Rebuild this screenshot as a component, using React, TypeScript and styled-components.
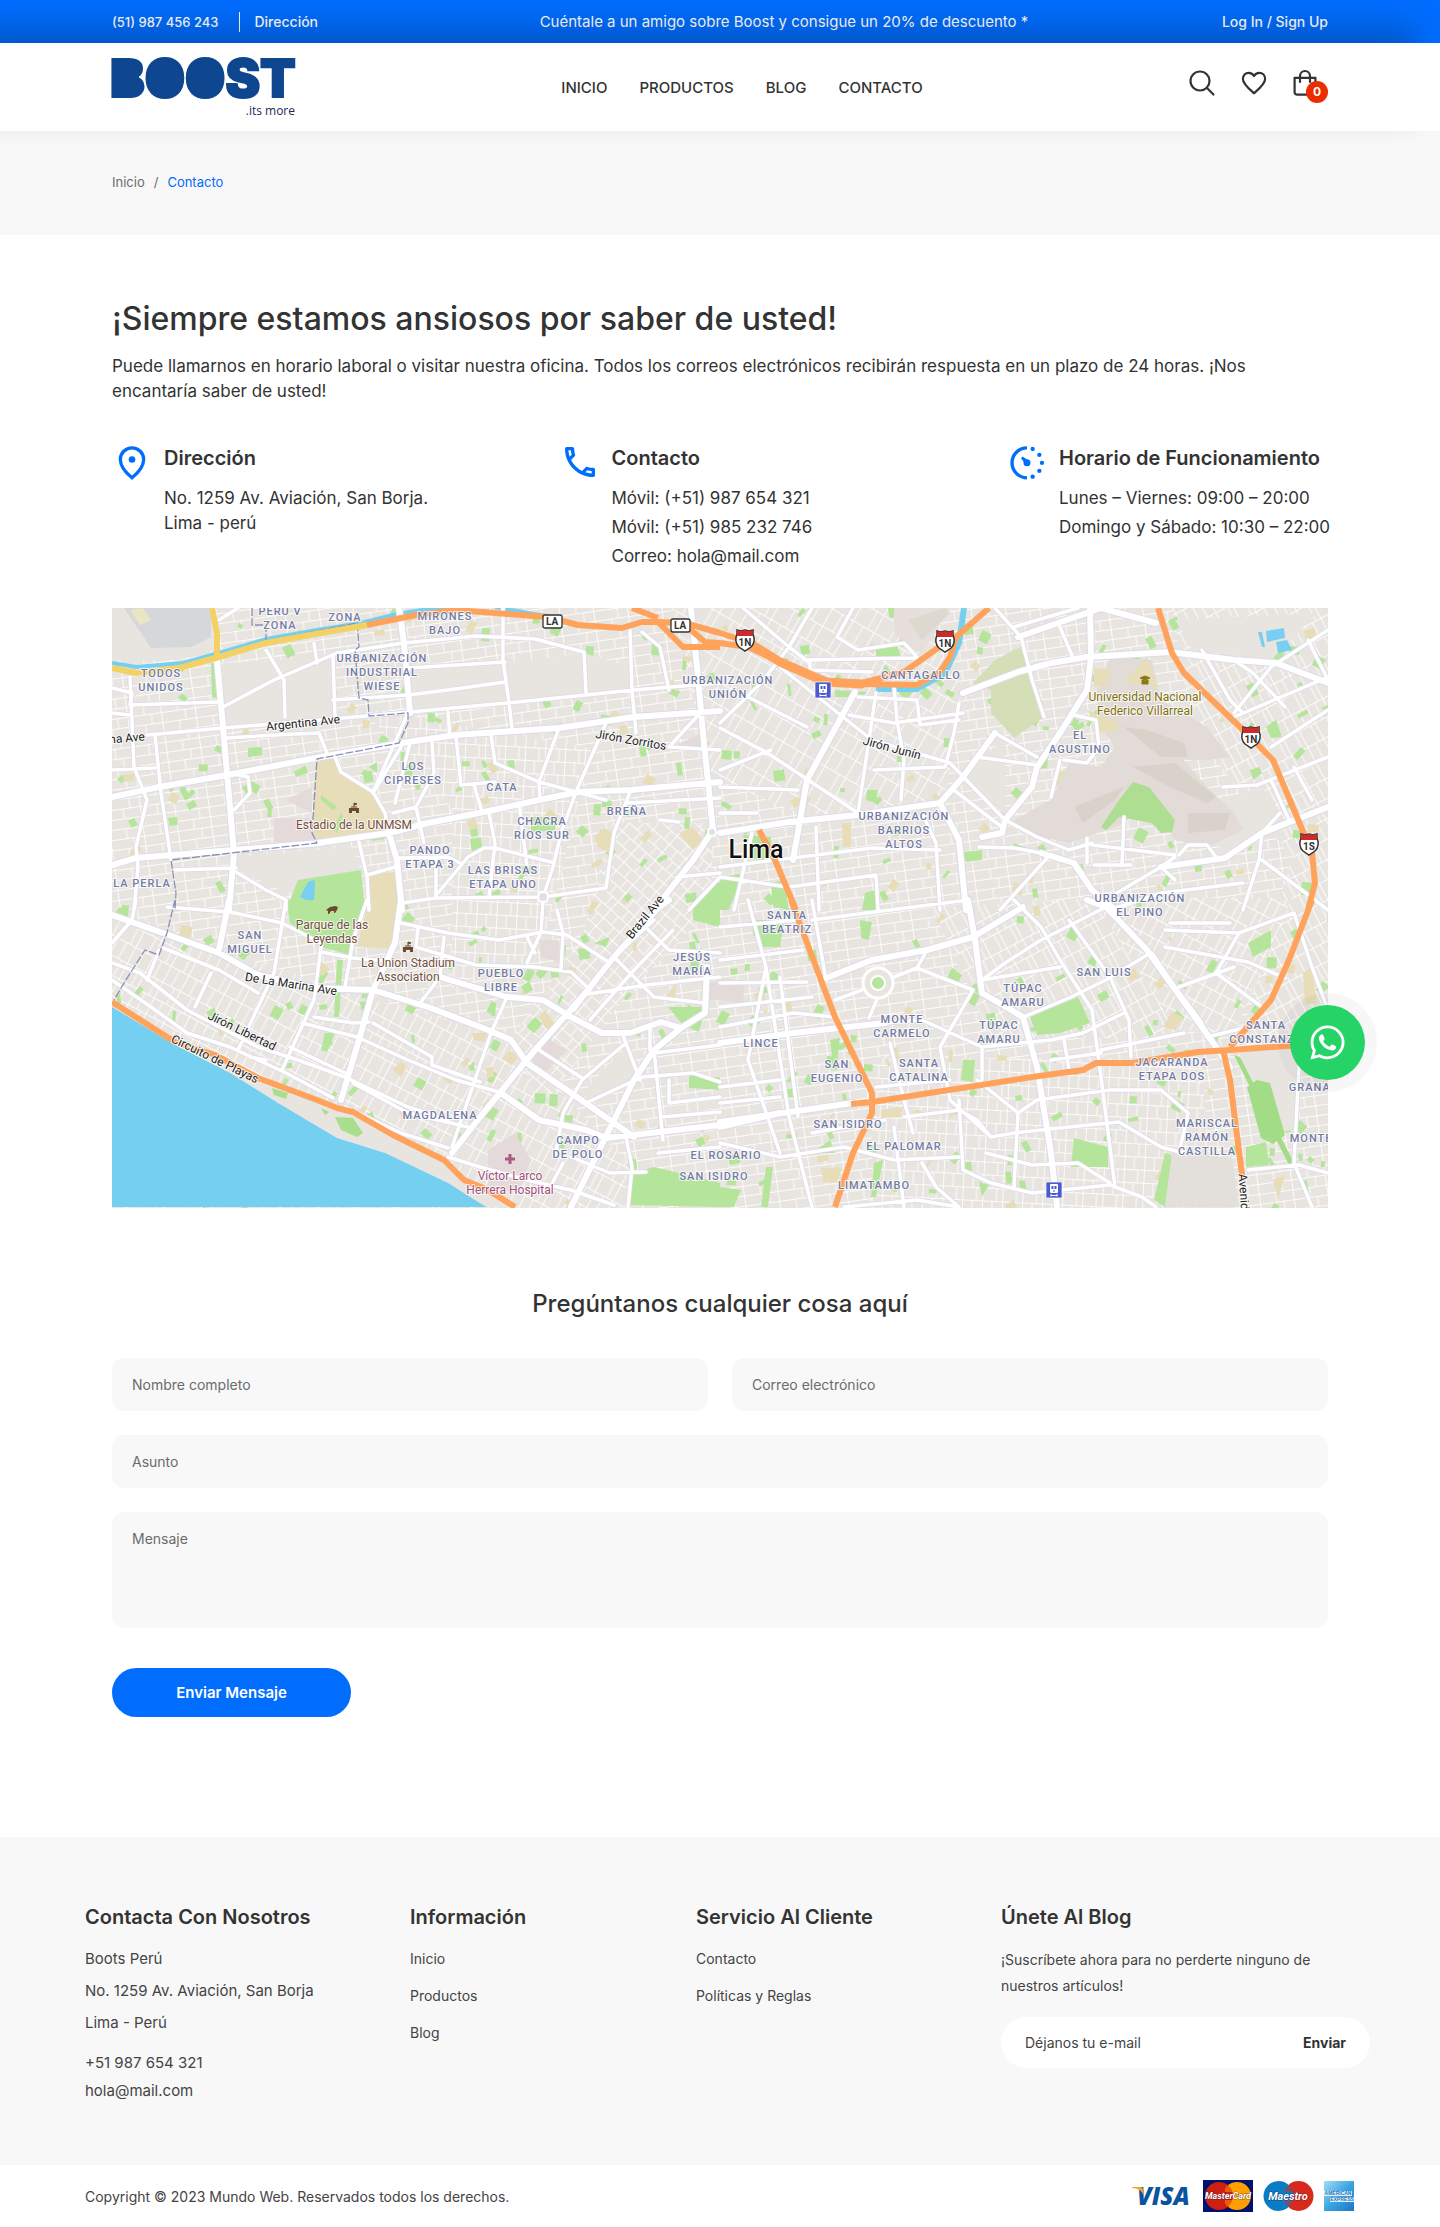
import React from "react";
import styled, { createGlobalStyle } from "styled-components";
import { MdOutlineCall } from "react-icons/md";
import { FaWhatsapp } from "react-icons/fa";

const color = {
  blue: "#006dff",
  ink: "#333333",
  text: "#444444",
  muted: "#6b6b6b",
  panel: "#f8f8f8",
};

const GlobalStyle = createGlobalStyle`
  *, *::before, *::after { box-sizing: border-box; }
  body {
    margin: 0;
    background: #fff;
    color: ${color.ink};
    font-family: Inter, "Liberation Sans", sans-serif;
    font-size: 17px;
  }
  h1, h2, h3, p, ul { margin: 0; padding: 0; }
  ul { list-style: none; }
  a { color: inherit; text-decoration: none; }
  button, input, textarea { font-family: inherit; border: 0; }
  button { cursor: pointer; }
`;

/* ---------- Header ---------- */

const TopBar = styled.div`
  display: flex;
  align-items: center;
  justify-content: space-between;
  height: 43px;
  padding: 0 112px;
  background: ${color.blue};
  color: #fff;
  font-size: 14px;
  font-weight: 500;
`;

const TopLinks = styled.div`
  display: flex;
  align-items: center;
  padding-right: 28px;
`;

const TopPhone = styled.a`
  font-size: 13px;
`;

const TopDivider = styled.span`
  width: 1px;
  height: 20px;
  margin: 0 14px 0 21px;
  background: #fff;
`;

const Promo = styled.p`
  font-size: 15px;
  font-weight: 400;
`;

const Header = styled.header`
  position: relative;
  z-index: 1;
  display: flex;
  align-items: center;
  justify-content: space-between;
  height: 88px;
  padding: 0 112px;
  background: #fff;
  box-shadow: -24px -16px 32px rgba(0, 0, 0, 0.22);
`;

const Nav = styled.nav`
  display: flex;
  gap: 32px;
  font-size: 15px;
  font-weight: 500;
`;

const Actions = styled.div`
  display: flex;
  gap: 24px;
  padding-bottom: 8px;
`;

const IconButton = styled.button`
  position: relative;
  display: block;
  width: 28px;
  height: 28px;
  padding: 0;
  background: none;
  color: ${color.ink};
`;

const BagButton = styled(IconButton)`
  width: 36px;
  text-align: left;
`;

const Badge = styled.span`
  position: absolute;
  right: 0;
  bottom: -6px;
  width: 22px;
  height: 22px;
  border-radius: 50%;
  background: #eb2d00;
  color: #fff;
  font-size: 12px;
  font-weight: 700;
  line-height: 22px;
  text-align: center;
`;

const Crumbs = styled.nav`
  display: flex;
  gap: 9px;
  padding: 41px 112px 42px;
  background: ${color.panel};
  color: ${color.muted};
  font-size: 13px;
  line-height: 21px;
`;

const CurrentCrumb = styled.a`
  color: ${color.blue};
`;

/* ---------- Contact details ---------- */

const Main = styled.main`
  padding: 64px 112px 120px;
`;

const Title = styled.h1`
  font-size: 32px;
  font-weight: 500;
  line-height: 40px;
`;

const Lead = styled.p`
  margin-top: 15px;
  line-height: 25px;
`;

const Details = styled.div`
  display: grid;
  grid-template-columns: repeat(3, 321px);
  justify-content: space-between;
  margin: 38px 0 39px;
`;

const Detail = styled.section`
  display: flex;
  gap: 12px;
`;

const DetailIcon = styled.span`
  flex: none;
  width: 40px;
  height: 40px;
  color: ${color.blue};
`;

const DetailBody = styled.div<{ $gap: number }>`
  display: flex;
  flex-direction: column;
  gap: ${(p) => p.$gap}px;
  padding-top: 4px;
  line-height: 25px;
  white-space: nowrap;
`;

const DetailTitle = styled.h3<{ $after: number }>`
  margin-bottom: ${(p) => p.$after}px;
  font-size: 20px;
  font-weight: 600;
  line-height: 24px;
`;

const MapFrame = styled.div`
  height: 600px;
  overflow: hidden;

  svg {
    display: block;
    width: 100%;
    height: 100%;
  }
`;

const ChatButton = styled.a`
  position: absolute;
  top: 1005px;
  right: 75px;
  display: flex;
  align-items: center;
  justify-content: center;
  width: 75px;
  height: 75px;
  border-radius: 50%;
  background: #25d366;
  box-shadow: 0 0 0 12px rgba(0, 0, 0, 0.03);
  color: #fff;
  font-size: 39px;
`;

/* ---------- Contact form ---------- */

const Form = styled.form`
  display: grid;
  grid-template-columns: 1fr 1fr;
  gap: 24px;
  margin-top: 80px;
`;

const FormTitle = styled.h2`
  grid-column: 1 / -1;
  margin-bottom: 14px;
  font-size: 24px;
  font-weight: 500;
  line-height: 32px;
  text-align: center;
`;

const Field = styled.input<{ $wide?: boolean }>`
  grid-column: ${(p) => (p.$wide ? "1 / -1" : "auto")};
  width: 100%;
  height: 53px;
  padding: 0 20px;
  border-radius: 12px;
  background: ${color.panel};
  font-size: 14px;

  &::placeholder { color: ${color.muted}; opacity: 1; }
`;

const MessageField = styled.textarea`
  grid-column: 1 / -1;
  display: block;
  width: 100%;
  height: 116px;
  padding: 16px 20px;
  border-radius: 12px;
  background: ${color.panel};
  font-size: 14px;
  line-height: 22px;
  resize: none;

  &::placeholder { color: ${color.muted}; opacity: 1; }
`;

const Submit = styled.button`
  justify-self: start;
  width: 239px;
  height: 49px;
  margin-top: 16px;
  border-radius: 25px;
  background: ${color.blue};
  color: #fff;
  font-size: 15px;
  font-weight: 600;
`;

/* ---------- Footer ---------- */

const FooterTop = styled.footer`
  display: grid;
  grid-template-columns: 325fr 286fr 305fr 369fr;
  padding: 68px 70px 62px 85px;
  background: ${color.panel};
  color: ${color.text};
  font-size: 14px;
  line-height: 24px;
`;

const FooterTitle = styled.h3`
  margin-bottom: 18px;
  color: ${color.ink};
  font-size: 20px;
  font-weight: 600;
  line-height: 24px;
`;

const AddressList = styled.ul<{ $gap: number }>`
  display: flex;
  flex-direction: column;
  gap: ${(p) => p.$gap}px;
  font-size: 15px;

  & + & { margin-top: 16px; }
`;

const LinkList = styled.ul`
  display: flex;
  flex-direction: column;
  gap: 13px;
`;

const NewsText = styled.p`
  line-height: 26px;
`;

const NewsForm = styled.form`
  display: flex;
  align-items: center;
  height: 51px;
  margin-top: 18px;
  padding: 0 24px;
  border-radius: 26px;
  background: #fff;
`;

const NewsInput = styled.input`
  flex: 1;
  min-width: 0;
  padding: 0;
  background: none;
  font-size: 14px;

  &::placeholder { color: ${color.text}; opacity: 1; }
`;

const NewsButton = styled.button`
  padding: 0;
  background: none;
  color: ${color.ink};
  font-size: 14px;
  font-weight: 700;
`;

const FooterBottom = styled.div`
  display: flex;
  align-items: center;
  justify-content: space-between;
  height: 62px;
  padding: 0 86px 0 85px;
  color: ${color.text};
  font-size: 14px;
`;

const Payments = styled.div`
  display: flex;
  align-items: center;
  gap: 10px;

  svg { display: block; }
`;

/* ---------- Logo and icons ---------- */

const LogoLink = styled.a`
  display: block;

  svg { display: block; overflow: visible; }
`;

const Logo = () => (
  <svg width="184" height="62" viewBox="0 0 184 62" role="img" aria-label="Boost, its more">
    <g fill="#0e468f">
      <text x="-2" y="41" fontFamily="Inter, sans-serif" fontWeight="900" fontSize="52" stroke="#0e468f" strokeWidth="2">
        BOOST
      </text>
      <rect x="7" y="8" width="20" height="28" />
      <ellipse cx="55" cy="22" rx="14" ry="17" />
      <ellipse cx="96" cy="22" rx="14" ry="17" />
    </g>
    <text x="183" y="59" textAnchor="end" fontFamily="'Open Sans', sans-serif" fontSize="12" fill="#1c2c52">
      .its more
    </text>
  </svg>
);

const SearchIcon = () => (
  <svg width="28" height="28" viewBox="0 0 28 28" fill="none" stroke="currentColor" strokeWidth="2.2" strokeLinecap="round">
    <circle cx="12" cy="12" r="9.500" />
    <path d="M19 19l6.500 6.500" />
  </svg>
);

const HeartIcon = () => (
  <svg width="28" height="28" viewBox="0 0 28 28" fill="none" stroke="currentColor" strokeWidth="2.200" strokeLinejoin="round">
    <path d="M14 24.300C9.500 20.300 2.900 15 2.900 10c0-3.600 2.500-6.200 5.800-6.200 2.200 0 4.200 1.200 5.300 3.200 1.100-2 3.100-3.200 5.300-3.200 3.300 0 5.800 2.600 5.800 6.200 0 5-6.600 10.300-11.100 14.300z" />
  </svg>
);

const BagIcon = () => (
  <svg width="28" height="28" viewBox="0 0 28 28" fill="none" stroke="currentColor" strokeWidth="2.200" strokeLinejoin="round">
    <path d="M2.600 8.800h20.800v14.400a2.500 2.500 0 0 1-2.500 2.500H5.100a2.500 2.500 0 0 1-2.500-2.500z" />
    <path d="M8 13V7a5 5 0 0 1 10 0v6" strokeLinecap="round" />
  </svg>
);

const PinIcon = () => (
  <svg width="40" height="40" viewBox="0 0 24 24" fill="none" stroke="currentColor" strokeWidth="2">
    <path d="M12 21.500C9.200 19.200 5 14.900 5 10.500a7 7 0 0 1 14 0c0 4.400-4.200 8.700-7 11z" />
    <circle cx="12" cy="10.500" r="2" fill="currentColor" stroke="none" />
  </svg>
);

const GaugeIcon = () => (
  <svg width="40" height="40" viewBox="0 0 24 24" fill="currentColor">
    <path d="M12 3.500a9 9 0 0 0 0 18" fill="none" stroke="currentColor" strokeWidth="2" />
    <circle cx="15.400" cy="4.200" r="1.300" />
    <circle cx="19.400" cy="7.700" r="1.300" />
    <circle cx="21" cy="12.500" r="1.300" />
    <circle cx="19.400" cy="17.300" r="1.300" />
    <circle cx="15.400" cy="20.800" r="1.300" />
    <circle cx="12" cy="12.500" r="2.100" />
    <path d="M8.400 9.700l1-1 3.600 2.500-1.800 2.200z" />
  </svg>
);

/* ---------- Map ---------- */

type Pt = [number, number];
type TileName = "nw" | "ne" | "sw" | "se";

// Each survey tile has its own local grid; the origin and scale place it on the map.
const tiles: Record<TileName, { kx: number; x: number; y: number }> = {
  nw: { kx: 2.529, x: -12, y: -8 },
  ne: { kx: 2.178, x: 608, y: -8 },
  sw: { kx: 2.529, x: -12, y: 292 },
  se: { kx: 2.178, x: 608, y: 292 },
};

const place = (tile: TileName, x: number, y: number): Pt => [
  Math.round(x / tiles[tile].kx + tiles[tile].x),
  Math.round(y / 3 + tiles[tile].y),
];

const trace = (tile: TileName, source: string, closed = false) =>
  source
    .split("|")
    .map((line) => {
      const n = line.trim().split(/[ ,]+/).map(Number);
      let d = "";
      for (let i = 0; i < n.length; i += 2) {
        d += (i ? "L" : "M") + place(tile, n[i], n[i + 1]).join(" ");
      }
      return closed ? d + "Z" : d;
    })
    .join("");

const avenues: Record<TileName, string> = {
  nw: "297,180 310,380 322,520 340,760 325,930|755,24 770,130 785,340|30,590 150,560 320,525 560,470 760,430 900,405 1160,385 1350,350 1568,332|550,730 730,700 830,670 970,635 1110,600 1210,575 1340,570 1568,545|1495,24 1510,200 1525,400 1550,690|1550,690 1500,780 1400,930|30,795 90,775 340,750 560,730|730,700 750,780 765,930",
  ne: "0,700 150,665 300,645 480,610 530,530 600,400|295,275 190,540|530,280 650,215 720,190 800,170 980,155 1120,180 1210,190 1324,250|805,24 808,170 800,270 740,400 690,500 680,560 620,660 615,700 570,710|480,610 520,720 535,930|960,800 1100,775 1180,700 1324,620|650,110 830,24 950,70|700,760 770,790 810,870 860,930|190,540 160,780",
  sw: "30,45 160,100 300,160 400,225 540,265 690,270 830,320 980,390 1040,420 1080,490 1200,585 1350,710|760,0 745,130 690,270 660,400 610,600|1410,24 1300,170 1220,290 1100,450 960,650 890,760|860,230 1030,290 1120,300 1190,350 1270,400 1340,400 1420,365 1470,385 1530,340 1535,200|1470,385 1400,450 1350,540 1300,660 1190,920|1015,580 1110,660 1230,690 1280,715 1568,675|325,0 300,150|1410,24 1440,0",
  se: "0,665 290,610|230,235 330,180 450,150 550,110 660,20|540,0 555,120 570,280 660,350 690,500 720,760 735,922|840,20 930,150 1050,380 1110,500|0,680 130,640|800,0 840,20|0,430 160,400 360,370",
};

const streets: Record<TileName, string> = {
  nw: "120,405 310,385 560,360 785,335 1030,310 1350,270 1568,250|1020,24 1020,180 1035,310 1042,385|310,320 440,240 600,160 770,130 950,108 1100,118 1225,155 1230,280|590,170 595,350|420,150 465,240 468,350|1205,575 1165,700 1145,800 1120,890|1160,385 1110,545 1112,600|1280,370 1205,575|990,405 1000,490 1110,545 1280,600|900,410 912,555 1000,545|945,555 965,635|985,640 1000,730 985,890|1000,745 1140,785|855,880 930,770 970,745 1000,745|595,470 610,515 690,575 720,640 730,700|840,425 845,520 800,620 820,730|765,910 850,895 1120,890 1280,865 1300,700 1340,575|1330,610 1568,595|320,415 440,405 555,400 575,460|140,405 155,580 180,780|75,230 85,500 120,600 90,740 95,800 85,930|345,805 190,810|345,815 420,870 470,900 470,930|655,725 675,830 680,930|675,825 745,800 755,775 880,770 910,790|1340,90 1345,270 1355,400|1370,95 1415,140 1440,270|1460,830 1568,820|1490,930 1568,830|880,335 885,410|590,300 780,285 880,270 1025,245|780,205 1025,185|30,265 80,280 75,315 300,305|30,340 75,345|30,510 140,505|325,520 375,530 380,580 340,630|690,580 760,440|1060,610 1080,800|1440,440 1520,335|1440,440 1568,450|350,24 300,60|540,130 550,190|785,430 745,610|740,640 800,620|1415,660 1465,665|850,780 850,890|690,575 780,340",
  ne: "0,370 90,250 150,140 200,24|50,24 150,140 195,190 195,210 330,215|0,385 100,455 300,640|130,200 330,420 500,490 620,660|600,24 655,110 680,240 705,350|290,24 255,110 300,150 400,130 430,170|640,80 780,24|190,180 430,175|380,260 385,360 400,480 395,600|340,280 300,640|430,300 435,375 520,360|520,310 510,400 490,500|280,345 380,370 530,340|335,510 490,500|440,640 470,730 480,930|0,800 330,745 480,750|150,860 340,825 345,930|210,680 215,930|70,700 30,930|620,660 690,710 760,750 810,730|510,570 560,625 615,680|565,740 640,745 700,760|800,715 800,790|810,735 990,765|880,650 875,790|815,795 895,795|1000,765 1020,735 1060,735 1080,770|990,770 960,800 990,840|960,800 850,890|610,930 715,770|1180,700 1175,780 1140,930|1324,470 1170,555 1095,560|1120,340 1200,200 1324,90|1120,180 1160,220 1230,320|1120,350 1324,230|1200,540 1240,660|1200,440 1324,330|560,470 690,495|600,400 690,470|740,480 720,590|1050,150 1110,300 1140,340|0,560 170,570|0,640 80,640|0,830 90,850 150,860|740,80 770,180|300,290 430,300|770,345 820,360 825,440 800,490 750,480|1140,850 960,880 850,930|1180,780 1324,930|1220,640 1180,700|1280,120 1324,240|1250,500 1290,600|60,290 190,380|0,510 110,450",
  sw: "160,145 300,210 400,280|30,190 100,220 220,330 400,440 500,480 620,530 780,620 880,660|30,240 130,320 220,400 330,440 470,520 590,595|470,0 440,220 350,450|560,140 540,300 460,510|675,0 640,120 620,260|170,20 330,35 460,70 560,130|560,155 640,175 740,185|760,70 880,100 1010,120 1120,95 1180,105 1240,150 1290,190|800,140 950,195 1100,200 1190,215 1240,270|805,85 800,140|1120,0 1115,95 1080,190|1155,30 1170,100 1165,210|1030,290 990,400 930,600 890,740|1220,285 1380,255 1568,230|1330,430 1220,540 1170,640 1150,770|620,620 760,700 880,745|880,770 960,800 1080,840 1190,870 1300,915|650,410 780,480 900,540 1010,575|690,370 840,470 840,495 960,545|1230,610 1370,530 1500,520 1568,545|1400,450 1425,720|1330,710 1345,800 1335,920|1400,460 1568,435|1420,650 1568,635|1190,770 1290,820 1380,815|1320,400 1365,540|1110,450 1220,535|1300,170 1400,290 1530,310|1390,380 1390,450|540,350 640,370 680,365|510,370 650,410|280,220 240,320|150,150 120,240|480,440 620,520|420,480 380,470|640,550 780,640 930,680|870,110 860,230 810,310|1080,110 1100,160|1200,330 1300,170 1400,60|1240,360 1350,210 1450,90|1360,60 1440,150 1568,160|1440,540 1440,610 1568,590|1410,760 1568,740|30,130 80,60 90,0|1130,880 1170,790",
  se: "570,240 620,190 700,120 840,20|640,0 700,80 740,180 810,330 830,530 860,860|760,60 850,230 890,360 895,470|660,350 760,295 840,240 930,165|360,370 440,360 570,440 720,420 790,400 880,340|430,205 550,270 480,440 500,600 590,710|570,440 570,540|250,300 310,270|380,230 430,205|345,290 325,355|0,380 160,340 250,350|0,250 190,245|0,180 180,150|60,0 100,200 150,650 200,922|130,230 170,650|370,430 400,600 420,700|400,650 520,630 560,660 590,710 640,700 760,680 870,665 960,740 1010,760|0,730 130,770 270,740 380,780 520,770|520,600 530,810 590,850 680,880 850,855 920,890 950,922|640,860 650,640 690,600 850,570 960,570 1020,640 1000,760|580,760 680,795 780,790 850,850|380,680 400,922|1150,810 1260,795 1324,820|1260,500 1250,790 1290,922|1250,40 1290,200 1324,330|970,140 1150,185 1230,235|970,90 1130,100 1250,40|1130,100 1080,220 1180,320|940,160 990,260 1050,370|1060,410 1150,380|980,70 1110,70|750,420 760,510|830,450 1010,400|270,922 430,900 520,922|440,790 470,860 520,922|0,560 130,540|0,610 130,590|0,80 170,60|200,0 230,240|200,60 540,0|570,240 740,200|0,320 200,290|100,200 60,480 130,760|450,150 430,205|1000,260 1120,200|720,480 830,460|340,560 500,540|200,700 360,660|560,540 650,640",
};

const highways: Record<TileName, string> = {
  nw: "675,75 800,45 900,30 1000,38 1130,50 1210,75 1320,85 1370,65 1410,65 1480,70 1568,98|1345,24 1410,55|1410,65 1475,140 1568,142|1480,75 1530,125 1568,128",
  ne: "0,98 60,125 130,185 230,245 310,252 430,255 480,215 500,170 515,110 585,24|0,128 60,140 130,185|310,250 400,215 490,130 515,110|955,24 985,160 1010,220 1140,390 1205,480 1250,630 1290,760 1295,850 1280,930|85,690 120,780 165,930",
  sw: "30,305 190,425 290,465 400,535 550,600 600,625 640,635 740,705 870,780 920,840 980,870 1050,922",
  se: "155,0 190,130 250,350 330,580 330,640 290,760 250,922|285,612 330,605 680,530 790,510 820,490 900,490 1040,455 1110,450 1324,430|1290,0 1240,180 1200,300 1110,440|1095,450 1110,540 1135,800 1140,840",
};

const areas: { tile: TileName; fill: string; shape: string }[] = [
  { tile: "nw", fill: "#e8e4e0", shape: "30,24 285,24 285,150 200,180 30,180|310,190 590,170 600,350 310,380|785,210 1020,190 1035,305 785,330|1030,190 1225,160 1340,200 1345,265 1035,305|345,770 640,740 660,820 470,880 350,810" },
  { tile: "nw", fill: "#d6d7da", shape: "60,24 280,24 280,110 230,140 130,145" },
  { tile: "nw", fill: "#ece5c4", shape: "75,30 110,24 130,60 100,75" },
  { tile: "nw", fill: "#e7ddb8", shape: "548,480 600,470 620,530 690,580 720,640 720,690 555,725 535,700|680,820 750,815 752,930 680,930|1250,710 1275,685 1300,700 1290,760 1260,740|1465,700 1500,680 1525,720 1500,750" },
  { tile: "nw", fill: "#e4dada", shape: "440,655 535,655 545,722 440,735|470,600 535,560 535,640|1450,440 1520,400 1520,440" },
  { tile: "nw", fill: "#b5e59b", shape: "500,840 660,810 670,930 470,930|490,515 520,495 525,520 495,530|375,445 410,440 410,465 375,470|1090,650 1155,650 1150,690 1090,695|280,190 295,190 298,295 282,290|1500,930 1545,850 1568,850 1568,930|680,500 700,485 700,520|560,585 600,620 590,630 560,600|590,690 610,640 615,650 600,695" },
  { tile: "nw", fill: "#79cff2", shape: "525,845 543,840 540,912 505,892" },
  { tile: "sw", fill: "#b5e59b", shape: "470,0 665,0 635,165 560,140 480,70|1345,820 1400,800 1568,850 1568,922 1340,915|1437,320 1530,320 1515,395 1475,375|1500,0 1568,0 1568,80 1500,60|560,450 570,400 595,400 575,455|600,180 615,180 605,350 592,350|1490,530 1568,530 1568,570 1490,565|1250,130 1290,110 1280,140" },
  { tile: "sw", fill: "#e7ddb8", shape: "680,0 750,0 740,145 650,140|1430,290 1460,245 1455,295|1110,350 1125,330 1150,370 1130,390|740,510 765,480 775,500 760,530|205,75 235,80 225,120 200,110|940,400 980,400 970,425 945,420" },
  { tile: "sw", fill: "#e4dada", shape: "1090,480 1130,415 1180,450 1120,525|980,750 1050,700 1090,780 1060,880 980,860|1110,120 1160,120 1160,185 1115,170|1540,250 1568,240 1568,300 1540,300" },
  { tile: "sw", fill: "#e8e4e0", shape: "1220,580 1330,440 1355,530 1240,605" },
  { tile: "ne", fill: "#e8e4e0", shape: "990,60 1300,40 1200,180 1030,150|520,520 620,420 620,640 540,560|1080,600 1180,560 1230,660 1090,770" },
  { tile: "ne", fill: "#e6dfdb", shape: "380,24 500,24 440,160 400,130 380,100" },
  { tile: "ne", fill: "#ddd9cf", shape: "410,60 490,24 500,40 440,120" },
  { tile: "ne", fill: "#e2dbd8", shape: "850,170 940,180 960,300 1060,380 1110,470 1060,480 1010,480 1060,560 1120,640 1140,690 1060,740 990,720 980,700 900,650 860,680 760,730 660,700 640,660 720,600 760,490 830,500 860,440 830,380 820,280" },
  { tile: "ne", fill: "#d9d2cb", shape: "880,380 930,390 1010,430 1020,470 960,470|900,500 990,490 1080,590 1060,610 980,560|770,620 880,560 860,600 790,670|1020,640 1110,640 1100,690 1020,700" },
  { tile: "ne", fill: "#d4dfb8", shape: "640,150 655,140 680,240 705,350 640,415 590,340 590,270 550,250 600,180" },
  { tile: "ne", fill: "#aede92", shape: "900,545 935,560 990,660 985,695 960,700 940,670 870,650 840,690 830,680 870,600" },
  { tile: "ne", fill: "#e7ddb8", shape: "815,205 850,210 845,255 815,260|885,240 930,170 955,260 890,250|800,330 870,370 860,395 825,400|265,670 285,670 285,740 268,740" },
  { tile: "ne", fill: "#b5e59b", shape: "50,705 110,710 112,785 60,775|340,140 385,135 395,170 340,168|320,570 345,570 340,610 318,600|0,830 50,820 20,930 0,930|110,850 140,840 150,930 115,920|315,880 340,870 340,930 310,930|530,755 570,750 570,780 535,785|1190,380 1210,360 1225,410 1200,415|250,270 320,275 310,290 250,290|640,730 680,750 670,760 635,740|1155,510 1175,500 1180,520 1160,540" },
  { tile: "ne", fill: "#79cff2", shape: "1190,92 1228,85 1230,115 1192,125|1210,125 1235,120 1245,150 1215,158|1172,95 1180,95 1188,140 1180,140" },
  { tile: "se", fill: "#b5e59b", shape: "675,350 780,290 805,370 740,400 690,405|770,715 845,740 845,800 765,800|1145,740 1190,725 1195,795 1145,800|305,60 330,65 325,120 308,115|1150,130 1200,90 1200,140 1160,170|970,760 985,765 970,922 945,900|530,480 555,480 550,545 525,540|240,420 262,415 255,485 243,470|335,790 355,780 340,890 328,890|0,860 45,870 30,922 0,922|100,800 115,800 105,922 90,922|565,845 585,855 570,890|80,60 140,60 130,140 90,140|200,760 240,720 250,760" },
  { tile: "se", fill: "#e8e4e0", shape: "1130,460 1255,440 1250,690 1190,700" },
  { tile: "se", fill: "#e3dfdb", shape: "985,760 1115,775 1130,922 970,922" },
  { tile: "se", fill: "#a2dc86", shape: "1148,560 1170,540 1197,548 1230,705 1205,732 1178,715|1120,465 1132,470 1250,790 1240,795" },
  { tile: "se", fill: "#e7ddb8", shape: "965,380 985,335 1008,350 990,390|1270,220 1290,200 1300,310 1275,315|350,630 398,620 395,650 350,655|220,805 265,800 255,850 225,845|1205,840 1230,825 1215,900" },
  { tile: "se", fill: "#e4dada", shape: "0,235 55,245 50,310 0,300" },
];

const blocks = [
  { id: "grid-a", angle: -8, w: 17, h: 10 },
  { id: "grid-b", angle: 28, w: 10, h: 18 },
  { id: "grid-c", angle: 42, w: 11, h: 11 },
  { id: "grid-d", angle: 30, w: 12, h: 20 },
  { id: "grid-e", angle: -28, w: 9, h: 18 },
  { id: "grid-f", angle: 3, w: 10, h: 13 },
];

const districts: { grid: string; points: string }[] = [
  { grid: "grid-a", points: "0,0 1216,0 1216,600 0,600" },
  { grid: "grid-b", points: "0,300 120,345 260,392 400,430 520,560 520,600 0,600" },
  { grid: "grid-c", points: "500,215 600,215 600,300 520,380 430,500 400,430 470,330" },
  { grid: "grid-d", points: "560,0 800,0 850,80 830,210 700,210 600,170" },
  { grid: "grid-e", points: "1060,0 1216,0 1216,470 1130,430 1180,250 1080,120" },
  { grid: "grid-b", points: "980,290 1180,290 1120,430 1060,420" },
  { grid: "grid-e", points: "820,300 980,290 1070,430 880,430" },
  { grid: "grid-f", points: "250,100 480,140 430,340 340,380 340,200" },
  { grid: "grid-f", points: "760,450 1090,450 1100,600 760,600" },
];

const scatter = (() => {
  let seed = 20231;
  const next = () => {
    seed = (seed * 16807) % 2147483647;
    return seed / 2147483647;
  };
  const angles = [-8, 28, 42, -28, 4];
  return Array.from({ length: 520 }, (_, i) => ({
    x: Math.round(next() * 1216),
    y: Math.round(next() * 600),
    w: 3 + Math.round(next() * 8),
    h: 4 + Math.round(next() * 9),
    angle: angles[Math.floor(next() * angles.length)],
    fill: i % 4 === 0 ? "#e7ddb8" : "#b5e59b",
  }));
})();

type Tone = "area" | "road" | "poi" | "campus" | "health";

const MapText = styled.text<{ $tone: Tone }>`
  font-family: Roboto, "Liberation Sans", sans-serif;
  font-size: ${(p) => (p.$tone === "area" ? 11 : 12)}px;
  font-weight: ${(p) => (p.$tone === "area" ? 500 : 400)};
  letter-spacing: ${(p) => (p.$tone === "area" ? 1 : 0)}px;
  fill: ${(p) =>
    ({ area: "#737aa3", road: "#222", poi: "#744f40", campus: "#80700c", health: "#a04f78" })[p.$tone]};
  stroke: rgba(255, 255, 255, 0.8);
  stroke-width: 2px;
  paint-order: stroke;
  text-anchor: middle;
`;

const CityText = styled.text`
  font-family: Roboto, "Liberation Sans", sans-serif;
  font-size: 25px;
  font-weight: 500;
  fill: #111;
  stroke: #fff;
  stroke-width: 2px;
  paint-order: stroke;
  text-anchor: middle;
`;

const ShieldText = styled.text`
  font-family: Roboto, "Liberation Sans", sans-serif;
  font-size: 10px;
  font-weight: 700;
  fill: #333;
  text-anchor: middle;
`;

type LabelData = [TileName, number, number, string, Tone?, number?];

const labels: LabelData[] = [
  ["nw", 455, 33, "PERU V|ZONA"],
  ["nw", 620, 52, "ZONA"],
  ["nw", 873, 48, "MIRONES|BAJO"],
  ["nw", 713, 174, "URBANIZACIÓN|INDUSTRIAL|WIESE"],
  ["nw", 155, 220, "TODOS|UNIDOS"],
  ["nw", 792, 497, "LOS|CIPRESES"],
  ["nw", 1017, 560, "CATA"],
  ["nw", 1332, 634, "BREÑA"],
  ["nw", 1117, 663, "CHACRA|RÍOS SUR"],
  ["nw", 835, 750, "PANDO|ETAPA 3"],
  ["nw", 1018, 810, "LAS BRISAS|ETAPA UNO"],
  ["nw", 106, 849, "LA PERLA"],
  ["nw", 514, 368, "Argentina Ave", "road", -6],
  ["nw", 68, 415, "na Ave", "road", -5],
  ["nw", 1343, 420, "Jirón Zorritos", "road", 10],
  ["nw", 642, 674, "Estadio de la UNMSM", "poi"],
  ["ne", 17, 240, "URBANIZACIÓN|UNIÓN"],
  ["ne", 438, 224, "CANTAGALLO"],
  ["ne", 785, 405, "EL|AGUSTINO"],
  ["ne", 925, 291, "Universidad Nacional|Federico Villarreal", "campus"],
  ["ne", 375, 443, "Jirón Junín", "road", 15],
  ["ne", 401, 648, "URBANIZACIÓN|BARRIOS|ALTOS"],
  ["ne", 914, 895, "URBANIZACIÓN|EL PINO"],
  ["sw", 380, 105, "SAN|MIGUEL"],
  ["sw", 587, 76, "Parque de las|Leyendas", "poi"],
  ["sw", 778, 190, "La Union Stadium|Association", "poi"],
  ["sw", 1014, 219, "PUEBLO|LIBRE"],
  ["sw", 1498, 170, "JESÚS|MARÍA"],
  ["sw", 1378, 52, "Brazil Ave", "road", -51],
  ["sw", 484, 252, "De La Marina Ave", "road", 9],
  ["sw", 360, 394, "Jirón Libertad", "road", 26],
  ["sw", 292, 478, "Circuito de Playas", "road", 26],
  ["sw", 860, 644, "MAGDALENA"],
  ["sw", 1209, 721, "CAMPO|DE POLO"],
  ["sw", 1584, 764, "EL ROSARIO"],
  ["sw", 1552, 828, "SAN ISIDRO"],
  ["sw", 1036, 827, "Víctor Larco|Herrera Hospital", "health"],
  ["se", 145, 45, "SANTA|BEATRIZ"],
  ["se", 90, 428, "LINCE"],
  ["se", 659, 263, "TÚPAC|AMARU"],
  ["se", 608, 375, "TÚPAC|AMARU"],
  ["se", 837, 215, "SAN LUIS"],
  ["se", 397, 356, "MONTE|CARMELO"],
  ["se", 254, 491, "SAN|EUGENIO"],
  ["se", 433, 488, "SANTA|CATALINA"],
  ["se", 984, 486, "JACARANDA|ETAPA DOS"],
  ["se", 1190, 376, "SANTA|CONSTANZA"],
  ["se", 1303, 560, "GRANADA"],
  ["se", 1304, 714, "MONTERR"],
  ["se", 278, 672, "SAN ISIDRO"],
  ["se", 400, 738, "EL PALOMAR"],
  ["se", 335, 854, "LIMATAMBO"],
  ["se", 1061, 668, "MARISCAL|RAMÓN|CASTILLA"],
  ["se", 1141, 884, "Avenida", "road", 86],
];

const MapLabel = ({ data: [tile, px, py, text, tone = "area", angle = 0] }: { data: LabelData }) => {
  const [x, y] = place(tile, px, py);
  return (
    <MapText $tone={tone} transform={angle ? `rotate(${angle} ${x} ${y})` : undefined}>
      {text.split("|").map((line, i) => (
        <tspan key={line} x={x} y={y + 4 + i * 14}>
          {line}
        </tspan>
      ))}
    </MapText>
  );
};

const Shield = ({ at, label }: { at: Pt; label: string }) => (
  <g transform={`translate(${at[0]} ${at[1]})`}>
    <path d="M-8-10l4 1 4-1 4 1 4-1v4c2 5 1 10-2 13L0 11l-6-4c-3-3-4-8-2-13z" fill="#fff" stroke="#333" strokeWidth="1.500" />
    <path d="M-8-10l4 1 4-1 4 1 4-1v6H-8z" fill="#cc2b2b" />
    <ShieldText y="6">{label}</ShieldText>
  </g>
);

const RouteBox = ({ at }: { at: Pt }) => (
  <g transform={`translate(${at[0]} ${at[1]})`}>
    <rect x="-9" y="-6" width="19" height="13" rx="2" fill="#fff" stroke="#333" strokeWidth="1.300" />
    <ShieldText x="0" y="4">LA</ShieldText>
  </g>
);

const Station = ({ at }: { at: Pt }) => (
  <g transform={`translate(${at[0]} ${at[1]})`}>
    <rect x="-8" y="-8" width="16" height="16" rx="1" fill="#4a5bcf" stroke="#fff" strokeWidth="0.700" />
    <rect x="-4" y="-6" width="8" height="9" rx="1" fill="#fff" />
    <path d="M-2.500-4h2v3h-2zM.5-4h2v3h-2zM-1 .5h2v1h-2z" fill="#4a5bcf" />
    <path d="M-3 5.500h6M-3 4v2.500M3 4v2.500" stroke="#fff" />
  </g>
);

const Stadium = ({ at }: { at: Pt }) => (
  <g transform={`translate(${at[0]} ${at[1]})`} fill="#6b4a2f">
    <path d="M-5-1h10v5h-3v-2h-4v2h-3z" />
    <path d="M-3-2h6M0-2v-4l3 1-3 1" stroke="#6b4a2f" />
  </g>
);

const tileNames: TileName[] = ["nw", "ne", "sw", "se"];

const CityMap = () => {
  const avenuePath = tileNames.map((t) => trace(t, avenues[t])).join("");
  const streetPath = tileNames.map((t) => trace(t, streets[t])).join("");
  const highwayPath = tileNames.map((t) => trace(t, highways[t])).join("");
  const [hx, hy] = place("sw", 1036, 778);
  return (
    <svg viewBox="0 0 1216 600" preserveAspectRatio="xMidYMid slice" role="img" aria-label="Mapa de Lima">
      <defs>
        {blocks.map((b) => (
          <pattern key={b.id} id={b.id} width={b.w * 2} height={b.h * 2} patternUnits="userSpaceOnUse" patternTransform={`rotate(${b.angle})`}>
            <rect width={b.w * 2} height={b.h * 2} fill="#e8e4e0" />
            <path
              d={`M0 .5H${b.w * 2}M0 ${b.h}.5H${b.w * 2}M.5 0V${b.h * 2}M${b.w} 0V${b.h}M${Math.round(b.w * 1.4)} ${b.h}V${b.h * 2}`}
              stroke="#fff"
              strokeOpacity="0.85"
              strokeWidth="1"
            />
          </pattern>
        ))}
      </defs>

      <g>
        {districts.map((d) => (
          <polygon key={d.points} points={d.points} fill={`url(#${d.grid})`} />
        ))}
      </g>
      <g>
        {scatter.map((s, i) => (
          <rect key={i} x={s.x} y={s.y} width={s.w} height={s.h} fill={s.fill} transform={`rotate(${s.angle} ${s.x} ${s.y})`} />
        ))}
      </g>
      {areas.map((a) => (
        <path key={a.shape} d={trace(a.tile, a.shape, true)} fill={a.fill} />
      ))}

      <path d={trace("sw", "30,322 190,435 330,520 450,610 600,715 720,760 880,850 975,922 1050,922 870,790 640,640 550,605 400,545 290,475 30,305", true)} fill="#e8e4e0" />
      <path d={trace("sw", "595,650 640,655 665,700 650,712 610,690|435,565 475,580 470,597 440,585|560,625 580,635 570,645", true)} fill="#a8df8c" />
      <path d={trace("sw", "30,322 190,435 330,520 450,610 600,715 720,760 880,850 975,922 30,922", true)} fill="#75cff0" />
      <g fill="none" stroke="#75cff0" strokeWidth="4">
        <path d={trace("nw", "30,188 90,200 210,188 300,160 420,118 550,90 660,68 750,42 830,28 880,20|1000,22 1070,35 1140,50")} />
        <path d={trace("ne", "532,24 520,130 490,220 430,268 340,268")} strokeWidth="6" />
      </g>

      <g fill="none" strokeLinejoin="round" strokeLinecap="round">
        <path d={streetPath} stroke="#dcdbe8" strokeWidth="5" />
        <path d={avenuePath} stroke="#dcdbe8" strokeWidth="8" />
        <path d={streetPath} stroke="#fff" strokeWidth="3.500" />
        <path d={avenuePath} stroke="#fff" strokeWidth="6" />
        <circle cx="766" cy="375" r="15" stroke="#fff" strokeWidth="3" fill="#e8e4e0" />
        <circle cx="766" cy="375" r="7" stroke="#fff" strokeWidth="2" fill="#b5e59b" />
        <circle cx="431" cy="289" r="5" stroke="#fff" strokeWidth="2" fill="#dfe0e6" />
        <circle cx="600" cy="224" r="4" stroke="#fff" strokeWidth="2" fill="#dfe0e6" />
        <path
          d={
            trace("nw", "385,24 385,75 420,75 420,122 650,70 655,140 645,150 655,295 678,300 680,348 780,340 780,370 755,430 548,478 535,700 550,730 180,780 192,880 190,930") +
            trace("sw", "190,0 170,100 150,165 115,150 60,250 35,300")
          }
          stroke="#8a91b3"
          strokeWidth="1.300"
          strokeDasharray="8 2"
          strokeLinecap="butt"
        />
        <path d={trace("nw", "30,205 90,218 200,205 300,170 420,130 560,100 675,75|283,24 295,100 297,180")} stroke="#f3d165" strokeWidth="6" strokeLinecap="butt" />
        <path d={highwayPath} stroke="#ffa35c" strokeWidth="6" strokeLinecap="butt" />
        <path d={trace("ne", "60,125 130,185 230,245 310,252")} stroke="#ffa35c" strokeWidth="9" />
      </g>

      {labels.map((l, i) => (
        <MapLabel key={i} data={l} />
      ))}
      <CityText x="644" y="250">Lima</CityText>

      <RouteBox at={place("nw", 1143, 63)} />
      <RouteBox at={place("nw", 1467, 75)} />
      <Shield at={place("ne", 54, 120)} label="1N" />
      <Shield at={place("ne", 490, 122)} label="1N" />
      <Shield at={place("ne", 1156, 411)} label="1N" />
      <Shield at={place("ne", 1282, 733)} label="1S" />
      <Station at={place("ne", 225, 271)} />
      <Station at={place("se", 728, 871)} />
      <Stadium at={place("nw", 643, 628)} />
      <Stadium at={place("sw", 778, 145)} />
      <path d="M214 302l4-3 5-1 3 1-1 3-2 3h-1v-2h-3l-2 3h-1v-3z" fill="#6b4a2f" />
      <path d="M1028 70l5-2 5 2-5 2zM1030 72v4h6v-4l-3 1z" fill="#8a7714" stroke="#8a7714" />
      <path d={`M${hx - 5} ${hy}h10M${hx} ${hy - 5}v10`} stroke="#a85a80" strokeWidth="3" />
    </svg>
  );
};

/* ---------- Payment marks ---------- */

const Visa = () => (
  <svg width="61" height="24" viewBox="0 0 61 24" role="img" aria-label="Visa">
    <text x="5" y="21" fontFamily="'Open Sans', sans-serif" fontStyle="italic" fontWeight="800" fontSize="24" fill="#0a53a0">
      VISA
    </text>
    <path d="M0 3h8c2 0 3 1 3 3l1 6C10 7 6 4 0 4z" fill="#f2a52c" />
  </svg>
);

const MarkText = styled.text`
  font-family: Roboto, "Liberation Sans", sans-serif;
  font-style: italic;
  font-weight: 700;
  fill: #fff;
  stroke: rgba(20, 20, 60, 0.5);
  stroke-width: 1px;
  paint-order: stroke;
  text-anchor: middle;
`;

const MasterCard = () => (
  <svg width="50" height="32" viewBox="0 0 50 32" role="img" aria-label="MasterCard">
    <rect width="50" height="32" fill="#00126b" />
    <circle cx="34" cy="16" r="14" fill="#ff9f00" />
    <circle cx="16" cy="16" r="14" fill="#cf1f10" />
    <path d="M23 7h5M22 9h7M22 11h8M22 21h8M22 23h7M23 25h5" stroke="#ff9f00" strokeWidth="1" />
    <MarkText x="25" y="19" fontSize="9">MasterCard</MarkText>
  </svg>
);

const Maestro = () => (
  <svg width="51" height="32" viewBox="0 0 51 32" role="img" aria-label="Maestro">
    <circle cx="35.500" cy="16" r="15" fill="#d9291c" />
    <circle cx="15.500" cy="16" r="15" fill="#0a7cc4" />
    <path d="M23 7h5M22 9h7M22 11h8M22 21h8M22 23h7M23 25h5" stroke="#d9291c" strokeWidth="1" />
    <MarkText x="25" y="20" fontSize="11">Maestro</MarkText>
  </svg>
);

const Amex = () => (
  <svg width="30" height="30" viewBox="0 0 30 30" role="img" aria-label="American Express">
    <defs>
      <linearGradient id="amex" x1="0" y1="0" x2="1" y2="1">
        <stop offset="0" stopColor="#a5dbf8" />
        <stop offset="0.500" stopColor="#3aa5e2" />
        <stop offset="1" stopColor="#1f74c4" />
      </linearGradient>
    </defs>
    <rect width="30" height="30" fill="url(#amex)" />
    <path d="M0 10h28v5H0zM6 16h24v5H6z" fill="#d9effb" />
    <g fill="#2478b8" fontFamily="'Liberation Sans', sans-serif" fontWeight="700" fontSize="5" textAnchor="middle">
      <text x="14" y="14">AMERICAN</text>
      <text x="18" y="20">EXPRESS</text>
    </g>
  </svg>
);

/* ---------- Page ---------- */

const Page = styled.div`
  position: relative;
`;

const stay = (e: React.FormEvent) => e.preventDefault();

export default function App() {
  return (
    <Page>
      <GlobalStyle />
      <TopBar>
        <TopLinks>
          <TopPhone href="tel:+51987456243">(51) 987 456 243</TopPhone>
          <TopDivider />
          <a href="#direccion">Dirección</a>
        </TopLinks>
        <Promo>Cuéntale a un amigo sobre Boost y consigue un 20% de descuento *</Promo>
        <a href="#login">Log In / Sign Up</a>
      </TopBar>

      <Header>
        <LogoLink href="#inicio">
          <Logo />
        </LogoLink>
        <Nav aria-label="Principal">
          <a href="#inicio">INICIO</a>
          <a href="#productos">PRODUCTOS</a>
          <a href="#blog">BLOG</a>
          <a href="#contacto">CONTACTO</a>
        </Nav>
        <Actions>
          <IconButton type="button" aria-label="Buscar">
            <SearchIcon />
          </IconButton>
          <IconButton type="button" aria-label="Favoritos">
            <HeartIcon />
          </IconButton>
          <BagButton type="button" aria-label="Carrito">
            <BagIcon />
            <Badge>0</Badge>
          </BagButton>
        </Actions>
      </Header>

      <Crumbs aria-label="Ruta">
        <a href="#inicio">Inicio</a>
        <span>/</span>
        <CurrentCrumb href="#contacto">Contacto</CurrentCrumb>
      </Crumbs>

      <Main>
        <Title>¡Siempre estamos ansiosos por saber de usted!</Title>
        <Lead>
          Puede llamarnos en horario laboral o visitar nuestra oficina. Todos los correos electrónicos recibirán
          respuesta en un plazo de 24 horas. ¡Nos encantaría saber de usted!
        </Lead>

        <Details>
          <Detail id="direccion">
            <DetailIcon>
              <PinIcon />
            </DetailIcon>
            <DetailBody $gap={0}>
              <DetailTitle $after={16}>Dirección</DetailTitle>
              <p>No. 1259 Av. Aviación, San Borja.</p>
              <p>Lima - perú</p>
            </DetailBody>
          </Detail>
          <Detail>
            <DetailIcon>
              <MdOutlineCall size={40} />
            </DetailIcon>
            <DetailBody $gap={4}>
              <DetailTitle $after={12}>Contacto</DetailTitle>
              <p>Móvil: (+51) 987 654 321</p>
              <p>Móvil: (+51) 985 232 746</p>
              <p>Correo: hola@mail.com</p>
            </DetailBody>
          </Detail>
          <Detail>
            <DetailIcon>
              <GaugeIcon />
            </DetailIcon>
            <DetailBody $gap={4}>
              <DetailTitle $after={12}>Horario de Funcionamiento</DetailTitle>
              <p>Lunes – Viernes: 09:00 – 20:00</p>
              <p>Domingo y Sábado: 10:30 – 22:00</p>
            </DetailBody>
          </Detail>
        </Details>

        <MapFrame>
          <CityMap />
        </MapFrame>

        <Form onSubmit={stay}>
          <FormTitle>Pregúntanos cualquier cosa aquí</FormTitle>
          <Field type="text" placeholder="Nombre completo" aria-label="Nombre completo" />
          <Field type="email" placeholder="Correo electrónico" aria-label="Correo electrónico" />
          <Field $wide type="text" placeholder="Asunto" aria-label="Asunto" />
          <MessageField placeholder="Mensaje" aria-label="Mensaje" />
          <Submit type="submit">Enviar Mensaje</Submit>
        </Form>
      </Main>

      <FooterTop>
        <section>
          <FooterTitle>Contacta Con Nosotros</FooterTitle>
          <AddressList $gap={8}>
            <li>Boots Perú</li>
            <li>No. 1259 Av. Aviación, San Borja</li>
            <li>Lima - Perú</li>
          </AddressList>
          <AddressList $gap={4}>
            <li><a href="tel:+51987654321">+51 987 654 321</a></li>
            <li><a href="mailto:hola@mail.com">hola@mail.com</a></li>
          </AddressList>
        </section>
        <section>
          <FooterTitle>Información</FooterTitle>
          <LinkList>
            <li><a href="#inicio">Inicio</a></li>
            <li><a href="#productos">Productos</a></li>
            <li><a href="#blog">Blog</a></li>
          </LinkList>
        </section>
        <section>
          <FooterTitle>Servicio Al Cliente</FooterTitle>
          <LinkList>
            <li><a href="#contacto">Contacto</a></li>
            <li><a href="#politicas">Políticas y Reglas</a></li>
          </LinkList>
        </section>
        <section>
          <FooterTitle>Únete Al Blog</FooterTitle>
          <NewsText>¡Suscríbete ahora para no perderte ninguno de nuestros artículos!</NewsText>
          <NewsForm onSubmit={stay}>
            <NewsInput type="email" placeholder="Déjanos tu e-mail" aria-label="Déjanos tu e-mail" />
            <NewsButton type="submit">Enviar</NewsButton>
          </NewsForm>
        </section>
      </FooterTop>

      <FooterBottom>
        <p>Copyright © 2023 Mundo Web. Reservados todos los derechos.</p>
        <Payments>
          <Visa />
          <MasterCard />
          <Maestro />
          <Amex />
        </Payments>
      </FooterBottom>

      <ChatButton href="#whatsapp" aria-label="WhatsApp">
        <FaWhatsapp />
      </ChatButton>
    </Page>
  );
}
